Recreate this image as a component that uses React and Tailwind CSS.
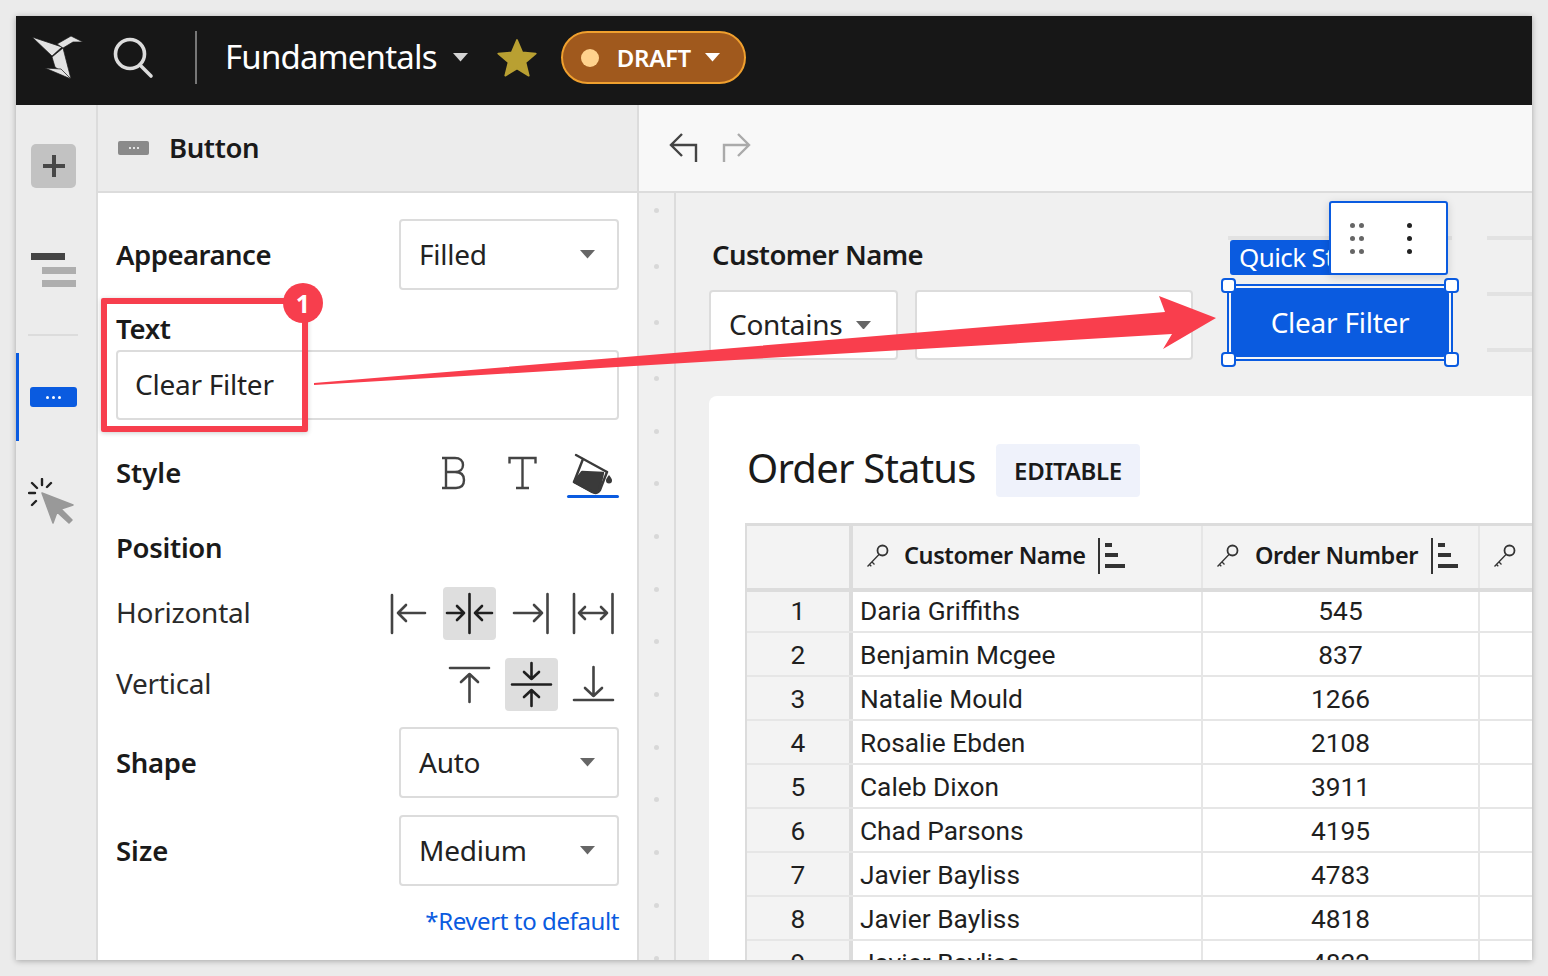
const Key = () => (
  <svg width="24" height="24" viewBox="0 0 24 24" fill="none" stroke="#333" strokeWidth="1.3" className="shrink-0">
    <circle cx="16.5" cy="6.500" r="5" strokeWidth="1.8" />
    <path d="M13 10.500 1.500 22.500M6 18l2.500 2.500M3.500 20.500l1.800 1.800" />
  </svg>
);
const Sort = () => (
  <svg width="28" height="36" viewBox="0 0 28 36" className="shrink-0" fill="#333">
    <rect x="0" y="0" width="2" height="36" />
    <rect x="7" y="5" width="7" height="4" />
    <rect x="7" y="15" width="13" height="4" />
    <rect x="7" y="26" width="20" height="4" />
  </svg>
);
const Caret = ({ className, w = 14 }) => (
  <svg width={w} height={w * 0.57} viewBox="0 0 14 8" className={className}>
    <path d="M0 0h14L7 8z" fill="currentColor" />
  </svg>
);
const Tile = ({ active, d, dark }) => (
  <div className={`w-[53px] h-[53px] rounded-[4px] ${active ? "bg-[#dedede]" : ""}`}>
    <svg width="53" height="53" viewBox="0 0 53 53" fill="none" stroke={dark ? "#1f1f1f" : "#444"} strokeWidth="2.6" strokeLinecap="round" strokeLinejoin="round">
      <path d={d} />
    </svg>
  </div>
);
const Select = ({ label }) => (
  <div className="w-[220px] h-[71px] border-2 border-[#dcdcdc] rounded-[4px] bg-white flex items-center justify-between pl-[18px] pr-[22px]">
    <span className="text-[28px] tracking-[-0.25px] text-[#222] pb-[2px]">{label}</span>
    <Caret className="text-[#666]" w={15} />
  </div>
);
const Label = ({ children, className = "tracking-[-0.3px]" }) => (
  <span className={`text-[27.500px] font-semibold text-[#1a1a1a] ${className}`}>{children}</span>
);
const rows = [
  ["Daria Griffiths", "545"],
  ["Benjamin Mcgee", "837"],
  ["Natalie Mould", "1266"],
  ["Rosalie Ebden", "2108"],
  ["Caleb Dixon", "3911"],
  ["Chad Parsons", "4195"],
  ["Javier Bayliss", "4783"],
  ["Javier Bayliss", "4818"],
  ["Javier Bayliss", "4822"],
];
const dots = Array.from({ length: 15 });

export default function App() {
  return (
    <div className="relative w-[1548px] h-[976px] overflow-hidden bg-[#ebebeb] p-4 font-['Noto_Sans',sans-serif]">
      <div className="w-[1516px] h-[944px] flex flex-col overflow-hidden shadow-[0_1px_6px_rgba(0,0,0,0.3)]">
        {/* Header */}
        <header className="h-[89px] shrink-0 bg-[#171717] flex items-center text-white pb-[6px]">
          <svg width="52" height="44" viewBox="0 0 52 44" className="ml-[15px] shrink-0" fill="#e2e2e2" stroke="#171717" strokeWidth="0.7">
            <path d="M1 1 31 11 21 20z" />
            <path d="M26 8 40 0 52 6 42 6 32 12z" />
            <path d="M21 21 32 12 40 43 24 31z" />
            <path d="M14 32 30 33 40 43z" />
          </svg>
          <svg width="44" height="44" viewBox="0 0 44 44" fill="none" stroke="#dcdcdc" strokeWidth="3.6" strokeLinecap="round" className="ml-[27px] shrink-0">
            <circle cx="20" cy="18" r="14.5" />
            <path d="M30 29 41 40" />
          </svg>
          <div className="ml-[41px] w-[2px] h-[53px] bg-[#777]" />
          <span className="ml-[28px] text-[33px] tracking-[-0.8px] leading-none pb-[3px]">Fundamentals</span>
          <Caret className="ml-[16px] text-[#d4d4d4]" w={15} />
          <svg width="44" height="44" viewBox="0 0 24 24" className="ml-[27px] shrink-0">
            <path d="M12 2.200 14.900 9l7.300.6-5.600 4.800 1.800 7.200L12 17.700l-6.400 3.900 1.800-7.200L1.800 9.600 9.100 9z" fill="#b9a032" stroke="#b9a032" strokeWidth="1" strokeLinejoin="round" />
          </svg>
          <div className="ml-[22px] w-[185px] h-[53px] rounded-full bg-[#a0591d] border-2 border-[#f0a02e] flex items-center pl-[18px]">
            <span className="w-[18px] h-[18px] rounded-full bg-[#ffd28d]" />
            <span className="ml-[18px] text-[24px] font-semibold tracking-[-0.3px]">DRAFT</span>
            <Caret className="ml-[14px] text-white" w={15} />
          </div>
        </header>

        <div className="flex-1 flex min-h-0">
          {/* Rail */}
          <aside className="relative w-[82px] shrink-0 bg-[#ececec] border-r-2 border-[#dcdcdc] flex flex-col items-start">
            <div className="mt-[39px] ml-[15px] w-[45px] h-[44px] rounded-[5px] bg-[#c2c2c2] flex items-center justify-center">
              <svg width="24" height="24" viewBox="0 0 24 24"><path d="M12 1v22M1 12h22" stroke="#484848" strokeWidth="4" /></svg>
            </div>
            <svg width="46" height="36" viewBox="0 0 46 36" className="mt-[65px] ml-[15px]">
              <rect x="0" y="0" width="34" height="7" fill="#444" />
              <rect x="11" y="14" width="34" height="7" fill="#aeaeae" />
              <rect x="11" y="27" width="34" height="7" fill="#aeaeae" />
            </svg>
            <div className="mt-[45px] ml-[12px] w-[50px] h-[2px] bg-[#dcdcdc]" />
            <div className="mt-[17px] w-full h-[88px] border-l-[3px] border-[#0a5be0] flex items-center pl-[11px]">
              <div className="w-[47px] h-[20px] rounded-[3px] bg-[#0a5be0] flex items-center justify-center gap-[3px]">
                <span className="w-[3px] h-[3px] rounded-full bg-white" />
                <span className="w-[3px] h-[3px] rounded-full bg-white" />
                <span className="w-[3px] h-[3px] rounded-full bg-white" />
              </div>
            </div>
            <svg width="48" height="46" viewBox="0 0 48 46" className="mt-[37px] ml-[12px]">
              <path d="M14 15 45 27 33 31 44 42 41 45 29 34 25 45z" fill="#999" stroke="#999" strokeWidth="1.5" strokeLinejoin="round" />
              <path d="M14 1v6M23 5l-4 4M1 15h6M4 27l4-4M4 5l5 5" stroke="#222" strokeWidth="2.4" strokeLinecap="round" fill="none" />
            </svg>
          </aside>

          {/* Panel */}
          <section className="w-[541px] shrink-0 border-r-2 border-[#dcdcdc] flex flex-col">
            <div className="h-[88px] shrink-0 bg-[#ececec] border-b-2 border-[#dcdcdc] flex items-center pl-[20px]">
              <div className="w-[31px] h-[14px] rounded-[2px] bg-[#8a8a8a] flex items-center justify-center gap-[2px]">
                <span className="w-[2px] h-[2px] rounded-full bg-white" />
                <span className="w-[2px] h-[2px] rounded-full bg-white" />
                <span className="w-[2px] h-[2px] rounded-full bg-white" />
              </div>
              <Label className="ml-[20px] tracking-[-0.4px]">Button</Label>
            </div>
            <div className="flex-1 bg-white pl-[18px] pr-[18px] pt-[26px] flex flex-col">
              <div className="flex items-center justify-between"><Label className="tracking-[-0.5px]">Appearance</Label><Select label="Filled" /></div>
              <div className="mt-[24px] h-[30px] flex items-center"><Label>Text</Label></div>
              <div className="mt-[6px] h-[70px] border-2 border-[#dcdcdc] rounded-[4px] flex items-center pl-[17px]">
                <span className="text-[28px] tracking-[-0.25px] text-[#222] pb-[2px]">Clear Filter</span>
              </div>
              <div className="mt-[28px] h-[50px] flex items-center justify-between">
                <Label className="tracking-[0px]">Style</Label>
                <div className="flex items-center gap-[18px]">
                  <svg width="52" height="50" viewBox="0 0 52 50" fill="none" stroke="#444" strokeWidth="2.4">
                    <path d="M15 10h13c5 0 8 3 8 7s-3 7-8 7H19M19 10v30M15 40h14c5 0 8-3 8-8s-3-8-9-8H19" />
                  </svg>
                  <svg width="52" height="50" viewBox="0 0 52 50" fill="none" stroke="#444" strokeWidth="2.4">
                    <path d="M12.500 15.500V10h26v5.500M25.500 10v30M19 40h13" />
                  </svg>
                  <div className="w-[52px] h-[50px] relative">
                    <svg width="52" height="47" viewBox="0 0 52 47" fill="none" stroke="#3a3a3a" strokeWidth="2.4" strokeLinejoin="round" strokeLinecap="round">
                      <path d="M9 7 40 24" />
                      <path d="M16 11 7 34l18 10c3 1.500 6 1 8-2l7-18" />
                      <path d="M15 24 36 25 32 42c-2 2.500-4 2.500-7 1.500L7 34z" fill="#3a3a3a" />
                      <path d="M42 27c2 2.500 3 4 3 5.500a3 3 0 0 1-6 0c0-1.500 1-3 3-5.500z" fill="#3a3a3a" stroke="none" />
                    </svg>
                    <div className="absolute left-0 right-0 bottom-0 h-[3px] rounded-full bg-[#0a5be0]" />
                  </div>
                </div>
              </div>
              <div className="mt-[25px] h-[50px] flex items-center"><Label>Position</Label></div>
              <div className="mt-[14px] flex items-center justify-between">
                <span className="text-[28px] tracking-[-0.25px] text-[#2a2a2a] pb-[4px]">Horizontal</span>
                <div className="flex gap-[9px] mr-[-1px]">
                  <Tile d="M11 8v38M44 26H17M25 18l-8 8 8 8" />
                  <Tile active dark d="M26.500 7v39M4 26h17M14 19l7 7-7 7M49 26H32M39 19l-7 7 7 7" />
                  <Tile d="M42.500 7v39M9 26h28M29 18l8 8-8 8" />
                  <Tile d="M7 7v39M45.500 7v39M12 26h28M18 20l-6 6 6 6M34 20l6 6-6 6" />
                </div>
              </div>
              <div className="mt-[18px] flex items-center justify-between">
                <span className="text-[28px] tracking-[-0.25px] text-[#2a2a2a] pb-[4px]">Vertical</span>
                <div className="flex gap-[9px] mr-[-1px]">
                  <Tile d="M7 10h39M26.500 44V16M18 24l8.500-8 8.500 8" />
                  <Tile active dark d="M7 26.500h39M26.500 5v16M19 14l7.500 7 7.500-7M26.500 48V32M19 39l7.500-7 7.500 7" />
                  <Tile d="M7 42h39M26.500 9v29M18 30l8.500 8 8.500-8" />
                </div>
              </div>
              <div className="mt-[16px] flex items-center justify-between"><Label>Shape</Label><Select label="Auto" /></div>
              <div className="mt-[17px] flex items-center justify-between"><Label className="tracking-[0px]">Size</Label><Select label="Medium" /></div>
              <div className="mt-[18px] text-right text-[24px] tracking-[-0.4px] leading-[34px] text-[#0a5be0]">*Revert to default</div>
            </div>
          </section>

          {/* Right */}
          <main className="flex-1 min-w-0 flex flex-col">
            <div className="h-[88px] shrink-0 bg-[#f8f8f8] border-b-2 border-[#dcdcdc] flex items-center pl-[30px] gap-[24px]">
              <svg width="29" height="30" viewBox="0 0 29 30" fill="none" stroke="#444" strokeWidth="2.4">
                <path d="M13 1 2 12l11 11M2 12h25v17" />
              </svg>
              <svg width="29" height="30" viewBox="0 0 29 30" fill="none" stroke="#aaa" strokeWidth="2.4">
                <path d="M16 1l11 11-11 11M27 12H2v17" />
              </svg>
            </div>
            <div className="flex-1 min-h-0 flex">
              <div className="w-[37px] shrink-0 bg-[#f0f0f0] border-r-2 border-[#dcdcdc] flex flex-col items-center gap-[47.700px] pt-[15px] overflow-hidden pr-[1px]">
                {dots.map((_, i) => (
                  <span key={i} className={`w-[5px] h-[5px] shrink-0 rounded-full bg-[#d8d8d8] ${i < 3 ? "mb-[3.300px]" : ""}`} />
                ))}
              </div>
              <div className="relative flex-1 min-w-0 bg-[#f0f0f0] flex flex-col overflow-hidden">
                <div className="absolute left-[552px] top-[43px] w-[224px] h-[4px] bg-[#e2e2e2]" />
                <div className="absolute left-[811px] right-0 top-[43px] h-[4px] bg-[#e2e2e2]" />
                <div className="absolute left-[811px] right-0 top-[99px] h-[4px] bg-[#e2e2e2]" />
                <div className="absolute left-[811px] right-0 top-[155px] h-[4px] bg-[#e2e2e2]" />
                <div className="relative pl-[33px] pt-[47px]">
                  <div className="pl-[3px] h-[30px] flex items-center">
                    <Label className="tracking-[-0.6px]">Customer Name</Label>
                  </div>
                  <div className="mt-[20px] flex items-start">
                    <div className="w-[189px] h-[70px] border-2 border-[#dcdcdc] rounded-[4px] bg-white flex items-center pl-[18px]">
                      <span className="text-[28px] tracking-[-0.3px] text-[#222] pb-[2px]">Contains</span>
                      <Caret className="ml-[14px] text-[#666]" w={15} />
                    </div>
                    <div className="ml-[17px] w-[278px] h-[70px] border-2 border-[#dcdcdc] rounded-[4px] bg-white" />
                    <div className="relative ml-[34px] w-[226px] h-[77px] mt-[-6px] mb-[-1px] border-2 border-[#0a5be0] rounded-[2px] p-[2px] bg-[#f6f6f6]">
                      <div className="h-full rounded-[6px] bg-[#0a5be0] flex items-center justify-center text-white text-[28px] tracking-[-0.25px] pb-[2px]">Clear Filter</div>
                      <div className="absolute left-[1px] top-[-46px] w-[148px] h-[35px] rounded-[3px] bg-[#0a5be0] text-white text-[26px] tracking-[-0.6px] pl-[9px] leading-[35px] overflow-hidden whitespace-nowrap">Quick Start</div>
                      <div className="absolute left-[100px] top-[-85px] w-[119px] h-[74px] rounded-[3px] bg-white border-2 border-[#0a5be0] shadow-[0_2px_8px_rgba(0,0,0,0.15)] flex items-center pl-[19px]">
                        <div className="grid grid-cols-2 gap-x-[4px] gap-y-[8px]">
                          {[0, 1, 2, 3, 4, 5].map((i) => <span key={i} className="w-[5px] h-[5px] rounded-full bg-[#666]" />)}
                        </div>
                        <div className="ml-[43px] flex flex-col gap-[8px]">
                          {[0, 1, 2].map((i) => <span key={i} className="w-[5px] h-[5px] rounded-full bg-[#222]" />)}
                        </div>
                      </div>
                      {["left-[-8px] top-[-8px]", "right-[-8px] top-[-8px]", "left-[-8px] bottom-[-8px]", "right-[-8px] bottom-[-8px]"].map((c) => (
                        <span key={c} className={`absolute ${c} w-[15px] h-[15px] rounded-[4px] bg-white border-2 border-[#0a5be0]`} />
                      ))}
                    </div>
                  </div>
                </div>
                <div className="ml-[33px] mt-[36px] flex-1 rounded-tl-lg bg-white pl-[36px] pt-[48px]">
                  <div className="flex items-center h-[53px] pl-[2px]">
                    <h1 className="text-[40px] tracking-[-0.8px] font-normal text-[#1a1a1a] leading-none pb-[6px] w-[230px] whitespace-nowrap">Order Status</h1>
                    <span className="ml-[19px] w-[144px] h-[53px] rounded-[4px] bg-[#eff2fb] flex items-center justify-center text-[24px] font-semibold tracking-[-0.3px] text-[#1a1a1a]">EDITABLE</span>
                  </div>
                  <div className="mt-[26px] border-l-2 border-t-[3px] border-[#dcdcdc] font-['Roboto',sans-serif] text-[#1f1f1f]">
                    <div className="flex h-[66px] border-b-[4px] border-[#dcdcdc] bg-[#f3f3f3] font-['Noto_Sans',sans-serif] font-semibold text-[23.500px] tracking-[-0.4px] text-[#1a1a1a]">
                      <div className="w-[106px] shrink-0 border-r-[4px] border-[#dcdcdc]" />
                      <div className="w-[350px] shrink-0 border-r-2 border-[#e6e6e6] flex items-center pl-[13px] pb-[2px]">
                        <Key /><span className="ml-[14px]">Customer Name</span><span className="ml-[12px]"><Sort /></span>
                      </div>
                      <div className="w-[277px] shrink-0 border-r-2 border-[#e6e6e6] flex items-center pl-[13px] pb-[2px]">
                        <Key /><span className="ml-[15px]">Order Number</span><span className="ml-[13px]"><Sort /></span>
                      </div>
                      <div className="flex-1 flex items-center pl-[13px] pb-[2px]"><Key /></div>
                    </div>
                    {rows.map((r, i) => (
                      <div key={i} className={`flex border-b-2 border-[#e6e6e6] text-[26.300px] ${i === 0 ? "h-[41px]" : "h-[44px]"}`}>
                        <div className={`w-[106px] shrink-0 border-r-[4px] border-[#dcdcdc] bg-[#f3f3f3] flex items-center justify-center ${i > 0 ? "pt-[4px]" : ""}`}>{i + 1}</div>
                        <div className={`w-[350px] shrink-0 border-r-2 border-[#e6e6e6] flex items-center pl-[7px] whitespace-nowrap ${i > 0 ? "pt-[4px]" : ""}`}>{r[0]}</div>
                        <div className={`w-[277px] shrink-0 border-r-2 border-[#e6e6e6] flex items-center justify-center ${i > 0 ? "pt-[4px]" : ""}`}>{r[1]}</div>
                        <div className="flex-1" />
                      </div>
                    ))}
                  </div>
                </div>
              </div>
            </div>
          </main>
        </div>
      </div>

      {/* Annotation */}
      <svg width="1548" height="976" viewBox="0 0 1548 976" className="absolute inset-0 pointer-events-none">
        <path d="M314 383 1165 312 1159 296 1216 318 1163 349 1172 334 314 385z" fill="#f93e4d" />
      </svg>
      <div className="absolute left-[101px] top-[298px] w-[207px] h-[134px] border-[6px] border-[#f73e4d] rounded-[2px] shadow-[0_1px_5px_rgba(0,0,0,0.2)]" />
      <div className="absolute left-[283px] top-[283px] w-[40px] h-[40px] rounded-full bg-[#f73e4d] text-white text-[25px] font-bold flex items-center justify-center leading-none">1</div>
    </div>
  );
}
